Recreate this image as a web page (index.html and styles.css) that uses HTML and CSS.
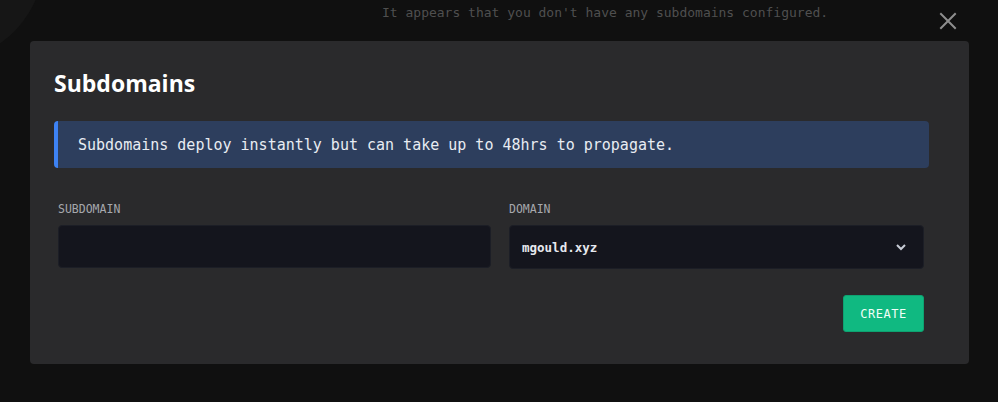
FILE: index.html
```html
<!DOCTYPE html>
<html>
<head>
<meta charset="utf-8">
<link rel="stylesheet" href="styles.css">
</head>
<body>
<div class="page">
  <div class="blob"></div>
  <p class="empty">It appears that you don't have any subdomains configured.</p>
  <button class="close" aria-label="Close">
    <svg width="18" height="18" viewBox="0 0 18 18"><path d="M2 2L16 16M16 2L2 16" stroke="#8e8e8e" stroke-width="2" stroke-linecap="square"/></svg>
  </button>
  <div class="modal">
    <h2 class="title">Subdomains</h2>
    <div class="alert">Subdomains deploy instantly but can take up to 48hrs to propagate.</div>
    <div class="form">
      <div class="field">
        <label class="label">SUBDOMAIN</label>
        <div class="input"></div>
      </div>
      <div class="field">
        <label class="label">DOMAIN</label>
        <div class="input select">
          <span>mgould.xyz</span>
          <svg width="12" height="8" viewBox="0 0 12 8"><path d="M2 2L6 6L10 2" fill="none" stroke="#c8ccd6" stroke-width="2"/></svg>
        </div>
      </div>
    </div>
    <div class="actions">
      <button class="create">CREATE</button>
    </div>
  </div>
</div>
</body>
</html>
```
FILE: styles.css
```css
html, body {
  margin: 0;
  padding: 0;
  background: #101010;
  height: 100%;
  overflow: hidden;
}
.page {
  position: relative;
  width: 998px;
  height: 402px;
  padding: 41px 29px 0 30px;
  box-sizing: border-box;
}
.blob {
  position: absolute;
  left: -150px;
  top: -150px;
  width: 195px;
  height: 210px;
  border-radius: 50%;
  background: #161616;
}
.empty {
  position: absolute;
  left: 382px;
  top: 4px;
  margin: 0;
  font-family: "DejaVu Sans Mono", monospace;
  font-size: 13px;
  line-height: 18px;
  color: #4f4f4f;
}
.close {
  position: absolute;
  left: 939px;
  top: 12px;
  width: 18px;
  height: 18px;
  padding: 0;
  border: 0;
  background: none;
}
.close svg { display: block; }
.modal {
  position: relative;
  background: #2a2a2c;
  border-radius: 4px;
  height: 323px;
  padding: 24px 40px 0 24px;
  box-sizing: border-box;
}
.title {
  margin: 0;
  font-family: "Open Sans", sans-serif;
  font-weight: 700;
  font-size: 23px;
  line-height: 36px;
  color: #ffffff;
}
.alert {
  margin-top: 20px;
  height: 47px;
  display: flex;
  align-items: center;
  padding-left: 20px;
  background: #2d3e5d;
  border-left: 4px solid #3d82f4;
  border-radius: 4px;
  font-family: "DejaVu Sans Mono", monospace;
  font-size: 15px;
  color: #e8ecf2;
}
.form {
  display: grid;
  grid-template-columns: 433px 415px;
  column-gap: 18px;
  padding: 33px 0 0 4px;
}
.field {
  display: flex;
  flex-direction: column;
}
.label {
  font-family: "DejaVu Sans Mono", monospace;
  font-size: 11.5px;
  line-height: 16px;
  color: #a6a8ad;
  margin-bottom: 8px;
}
.input {
  height: 43px;
  background: #14151d;
  border: 1px solid #1c1e26;
  border-radius: 4px;
  box-sizing: border-box;
}
.select {
  height: 44px;
  display: flex;
  align-items: center;
  justify-content: space-between;
  padding: 0 16px 0 12px;
  font-family: "DejaVu Sans Mono", monospace;
  font-weight: 700;
  font-size: 12.5px;
  color: #e6e8ee;
}
.select svg { display: block; }
.actions {
  display: flex;
  justify-content: flex-end;
  padding: 26px 5px 0 0;
}
.create {
  width: 81px;
  height: 37px;
  padding: 0;
  background: #10b981;
  border: 1px solid #0ea271;
  border-radius: 3px;
  font-family: "DejaVu Sans Mono", monospace;
  font-size: 12px;
  letter-spacing: 0.5px;
  color: #f0fff8;
}
```
